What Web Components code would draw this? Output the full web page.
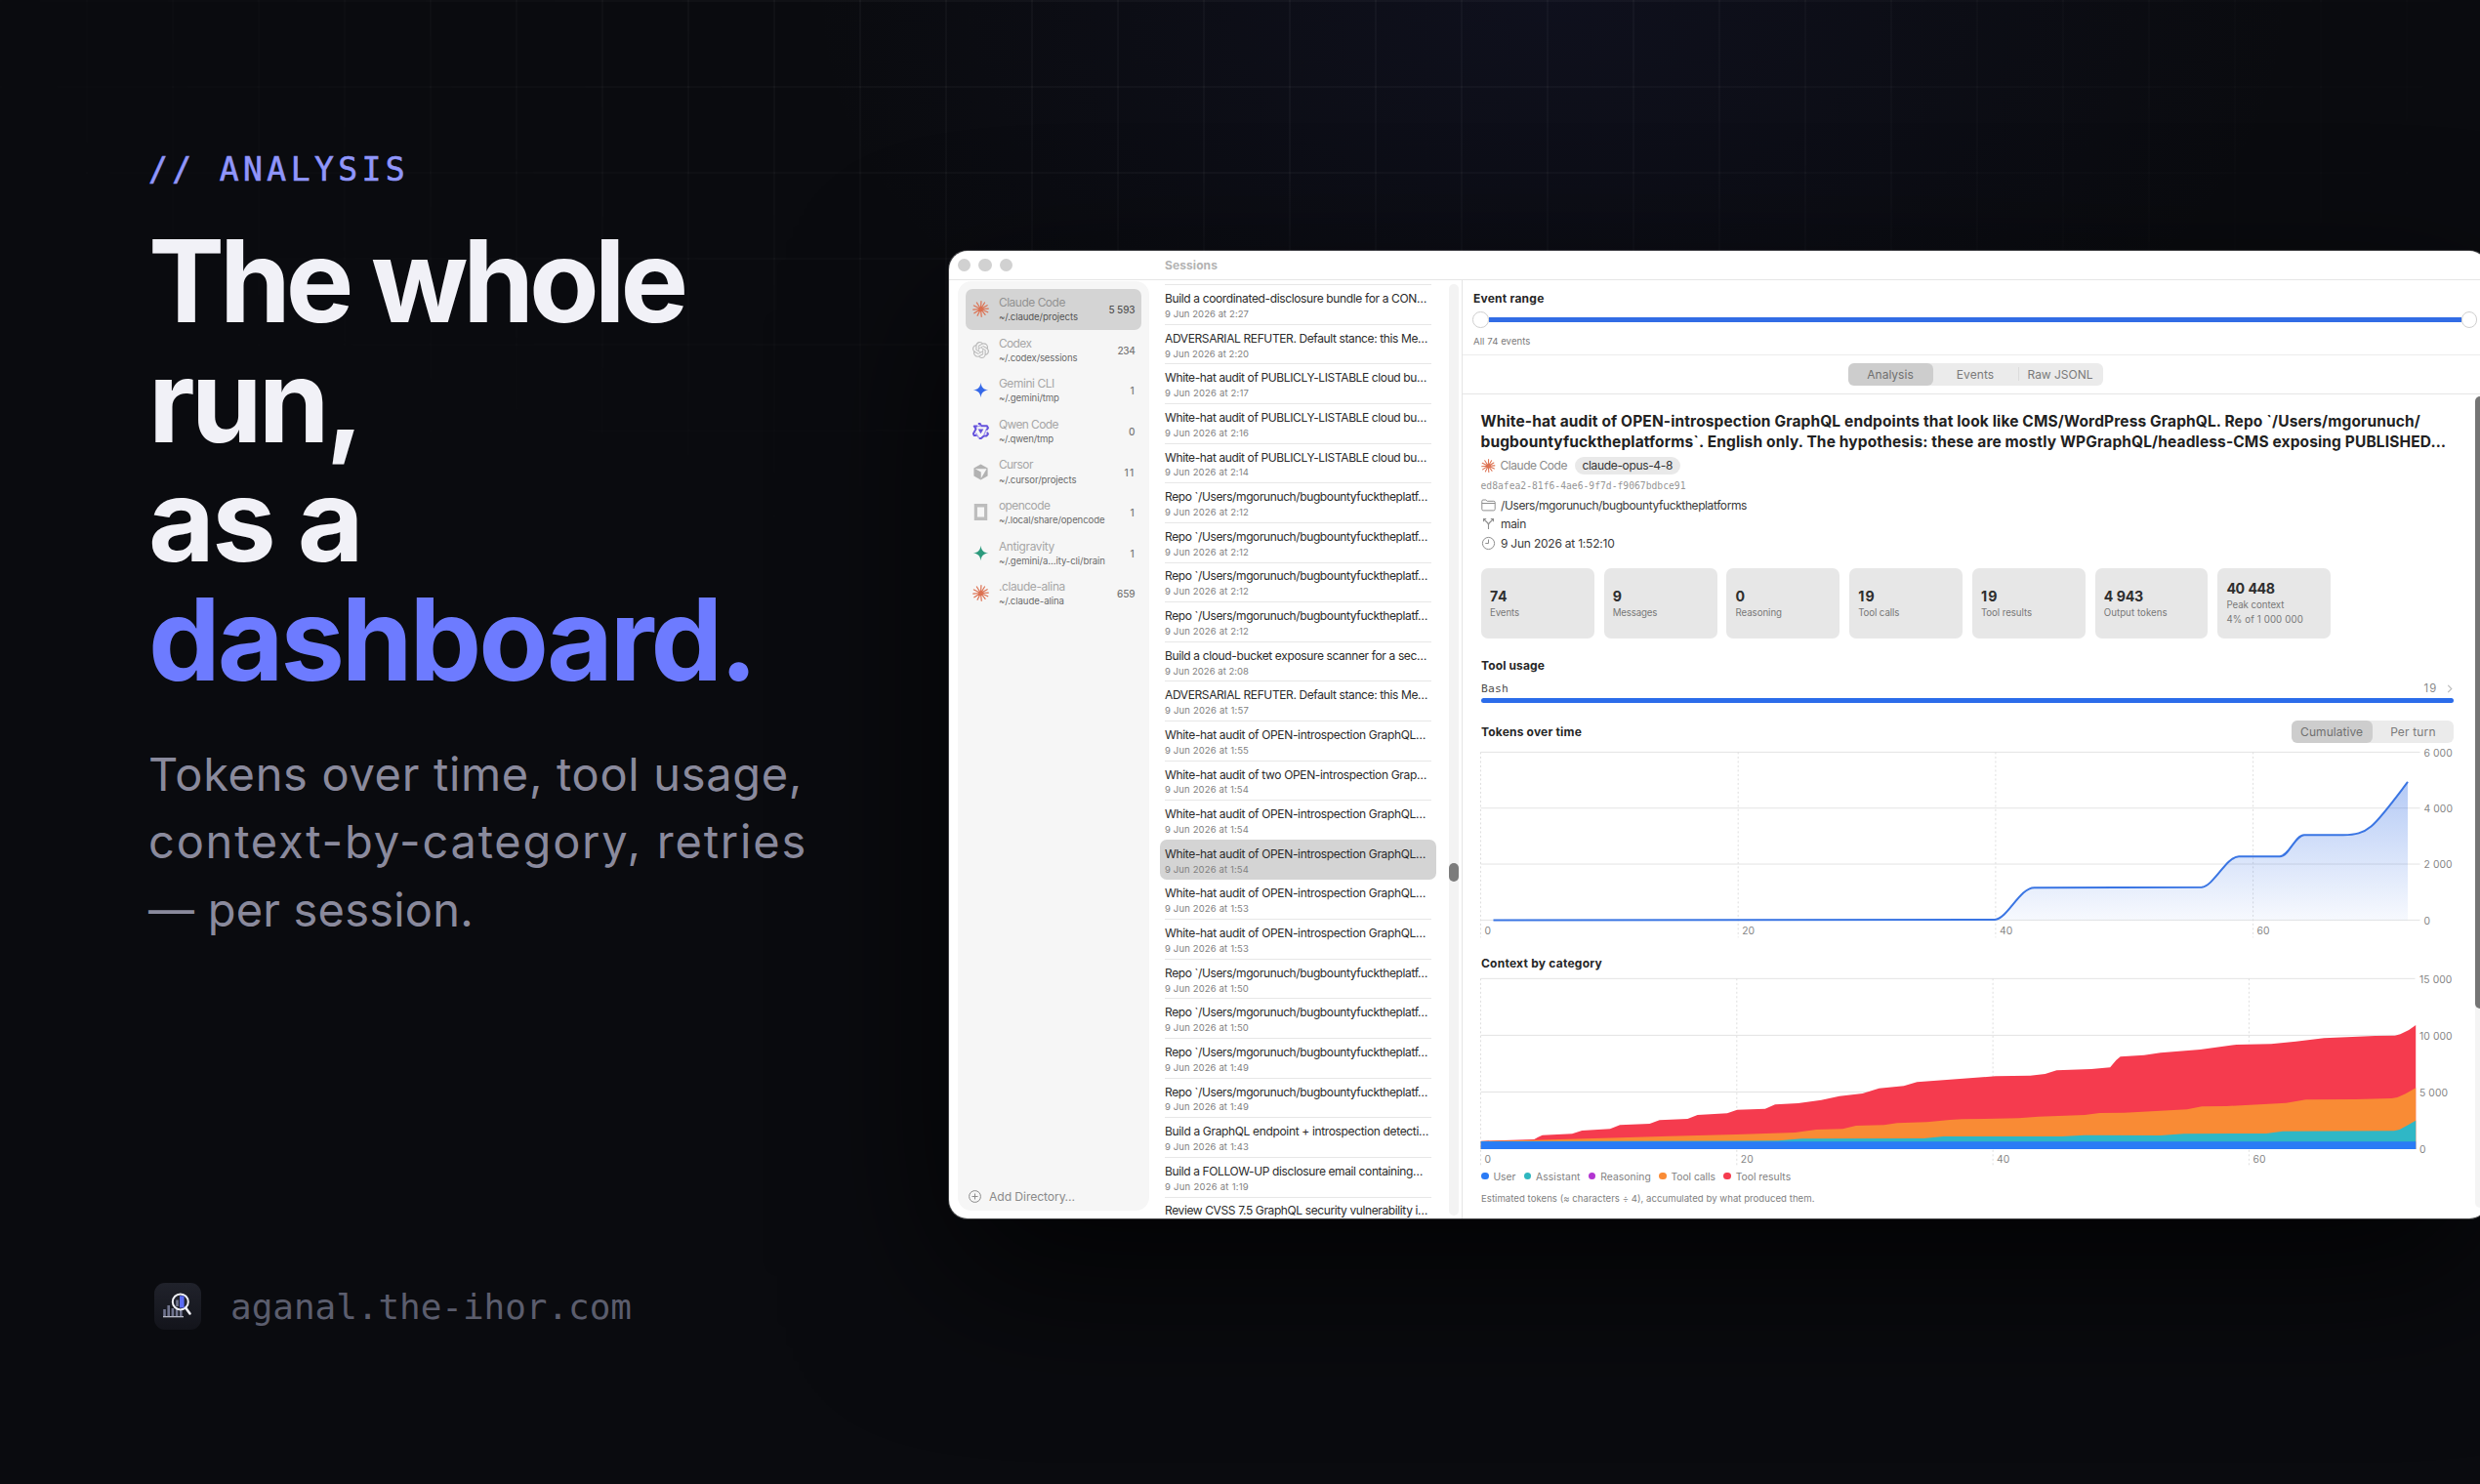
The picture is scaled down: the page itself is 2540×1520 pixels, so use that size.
<!DOCTYPE html>
<html lang="en">
<head>
<meta charset="utf-8">
<title>The whole run, as a dashboard.</title>
<style>
  body {
    margin: 0;
    background: #0a0b0f;
    font-family: Inter, "Liberation Sans", sans-serif;
    overflow: hidden;
  }
</style>
</head>
<body>
<promo-banner>
  <promo-copy slot="copy"></promo-copy>
  <app-window slot="window"></app-window>
</promo-banner>

<script>
'use strict';

const ICONS = {
  claude: `<svg viewBox="0 0 24 24" stroke="#dc7050" stroke-width="1.700" stroke-linecap="round">
    <path d="M12 12 12.6 1M12 12 17.6 2.8M12 12 21.4 6.6M12 12 23 11.4M12 12 22.2 16.6M12 12 18.4 20.4M12 12 13 23M12 12 7.2 21.6M12 12 2.6 18M12 12 1 12.8M12 12 2 7M12 12 6.2 2.8"/></svg>`,
  codex: `<svg viewBox="0 0 24 24" fill="#b9b9b9"><path d="M22.2819 9.8211a5.9847 5.9847 0 0 0-.5157-4.9108 6.0462 6.0462 0 0 0-6.5098-2.9A6.0651 6.0651 0 0 0 4.9807 4.1818a5.9847 5.9847 0 0 0-3.9977 2.9 6.0462 6.0462 0 0 0 .7427 7.0966 5.98 5.98 0 0 0 .511 4.9107 6.051 6.051 0 0 0 6.5146 2.9001A5.9847 5.9847 0 0 0 13.2599 24a6.0557 6.0557 0 0 0 5.7718-4.2058 5.9894 5.9894 0 0 0 3.9977-2.9001 6.0557 6.0557 0 0 0-.7475-7.0729zm-9.022 12.6081a4.4755 4.4755 0 0 1-2.8764-1.0408l.1419-.0804 4.7783-2.7582a.7948.7948 0 0 0 .3927-.6813v-6.7369l2.02 1.1686a.071.071 0 0 1 .038.052v5.5826a4.504 4.504 0 0 1-4.4945 4.4944zm-9.6607-4.1254a4.4708 4.4708 0 0 1-.5346-3.0137l.142.0852 4.783 2.7582a.7712.7712 0 0 0 .7806 0l5.8428-3.3685v2.3324a.0804.0804 0 0 1-.0332.0615L9.74 19.9502a4.4992 4.4992 0 0 1-6.1408-1.6464zM2.3408 7.8956a4.485 4.485 0 0 1 2.3655-1.9728V11.6a.7664.7664 0 0 0 .3879.6765l5.8144 3.3543-2.0201 1.1685a.0757.0757 0 0 1-.071 0l-4.8303-2.7865A4.504 4.504 0 0 1 2.3408 7.872zm16.5963 3.8558L13.1038 8.364 15.1192 7.2a.0757.0757 0 0 1 .071 0l4.8303 2.7913a4.4944 4.4944 0 0 1-.6765 8.1042v-5.6772a.79.79 0 0 0-.407-.667zm2.0107-3.0231l-.142-.0852-4.7735-2.7818a.7759.7759 0 0 0-.7854 0L9.409 9.2297V6.8974a.0662.0662 0 0 1 .0284-.0615l4.8303-2.7866a4.4992 4.4992 0 0 1 6.6802 4.66zM8.3065 12.863l-2.02-1.1638a.0804.0804 0 0 1-.038-.0567V6.0742a4.4992 4.4992 0 0 1 7.3757-3.4537l-.142.0805L8.704 5.459a.7948.7948 0 0 0-.3927.6813zm1.0976-2.3654l2.602-1.4998 2.6069 1.4998v2.9994l-2.5974 1.4997-2.6067-1.4997Z"/></svg>`,
  gemini: `<svg viewBox="0 0 24 24" fill="#3568e8"><path d="M12 1C12.8 8 16 11.200 23 12C16 12.800 12.800 16 12 23C11.200 16 8 12.800 1 12C8 11.200 11.200 8 12 1Z"/></svg>`,
  qwen: `<svg viewBox="0 0 24 24" fill="none" stroke="#6552dc" stroke-linejoin="round">
    <path d="M8.200 1.500 11 1.500 12.500 4.500H21L22.500 7.500 20 11M21.200 13.500 22.500 16.500 20.500 19H16.500L12.500 22.500H9.500M7 18.500H2.500L1.200 16 5 9 2.500 5H7" stroke-width="2.800"/>
    <path d="M7 5 12.500 4.800M20 10 16.500 18M9.500 22.500 5 15" stroke="#a79cf0" stroke-width="2"/>
    <path d="M8 9H16L12 16Z" fill="#6552dc" stroke="none"/></svg>`,
  cursor: `<svg viewBox="0 0 24 24"><path d="M12 .8 22 6.400V17.600L12 23.200 2 17.600V6.400Z" fill="#b2b2b2"/><path d="M3.500 7.300H20.500L12 21.800V12Z" fill="#f6f6f6"/><path d="M3.500 7.300 12 12V21.800L3 17Z" fill="#b2b2b2"/></svg>`,
  opencode: `<svg viewBox="0 0 24 24"><path d="M2.500 0H21.500V24H2.500Z M7 5V19H17V5Z" fill="#bdbdbd" fill-rule="evenodd"/></svg>`,
  antigravity: `<svg viewBox="0 0 24 24" fill="#2b9a7c"><path d="M12 1C12.800 8 16 11.200 23 12C16 12.800 12.800 16 12 23C11.200 16 8 12.800 1 12C8 11.200 11.200 8 12 1Z"/></svg>`,
  plus: `<svg viewBox="0 0 13 13" fill="none" stroke="#8a8a8a" stroke-width="1"><circle cx="6.500" cy="6.500" r="5.900"/><path d="M6.500 3.500V9.500M3.500 6.500H9.500"/></svg>`,
  folder: `<svg viewBox="0 0 15 15" fill="none" stroke="#8e8e8e" stroke-width="1"><path d="M.8 11.700V3.300Q.8 2 2.100 2H4.800L6.200 3.300H12.800Q14.200 3.300 14.200 4.600V11.500Q14.200 12.900 12.800 12.900H2.200Q.8 12.900 .8 11.700ZM.8 5.500H14.200"/></svg>`,
  branch: `<svg viewBox="0 0 15 15" fill="none" stroke="#8e8e8e" stroke-width="1.100"><path d="M7.500 13V8.800Q7.500 7.500 6.500 6.500L3 3M7.500 8.800Q7.500 7.500 8.500 6.500L12 3M2.500 5.200V2.500H5.200M9.800 2.500H12.500V5.200"/></svg>`,
  clock: `<svg viewBox="0 0 15 15" fill="none" stroke="#8e8e8e" stroke-width="1"><circle cx="7.500" cy="7.500" r="6.100"/><path d="M7.500 3.500V7.500H4.300"/></svg>`,
  chevron: `<svg viewBox="0 0 6 10" fill="none" stroke="#bdbdbd" stroke-width="1.300"><path d="M1 1 5 5 1 9"/></svg>`
};

const SOURCES = [
  ['claude', 'Claude Code', 68, '~/.claude/projects', 81, '5 593', 27],
  ['codex', 'Codex', 33.500, '~/.codex/sessions', 80.500, '234', 18],
  ['gemini', 'Gemini CLI', 57, '~/.gemini/tmp', 62, '1', 5],
  ['qwen', 'Qwen Code', 61, '~/.qwen/tmp', 56, '0', 6.500],
  ['cursor', 'Cursor', 35, '~/.cursor/projects', 79.500, '11', 11],
  ['opencode', 'opencode', 52.500, '~/.local/share/opencode', 108.500, '1', 5],
  ['antigravity', 'Antigravity', 57, '~/.gemini/a…ity-cli/brain', 109, '1', 5],
  ['claude', '.claude-alina', 68, '~/.claude-alina', 67, '659', 18.500]
];

const REPO = 'Repo `/Users/mgorunuch/bugbountyfucktheplatf…';
const OPEN = 'White-hat audit of OPEN-introspection GraphQL…';
const PUBLIC = 'White-hat audit of PUBLICLY-LISTABLE cloud bu…';
const REFUTER = 'ADVERSARIAL REFUTER. Default stance: this Me…';

// [title, width, time]
const SESSIONS = [
  ['Build a coordinated-disclosure bundle for a CON…', 268, '2:27'],
  [REFUTER, 269, '2:20'],
  [PUBLIC, 268, '2:17'],
  [PUBLIC, 268, '2:16'],
  [PUBLIC, 268, '2:14'],
  [REPO, 269, '2:12'],
  [REPO, 269, '2:12'],
  [REPO, 269, '2:12'],
  [REPO, 269, '2:12'],
  ['Build a cloud-bucket exposure scanner for a sec…', 268, '2:08'],
  [REFUTER, 269, '1:57'],
  [OPEN, 267, '1:55'],
  ['White-hat audit of two OPEN-introspection Grap…', 268, '1:54'],
  [OPEN, 267, '1:54'],
  [OPEN, 267, '1:54'],
  [OPEN, 267, '1:53'],
  [OPEN, 267, '1:53'],
  [REPO, 269, '1:50'],
  [REPO, 269, '1:50'],
  [REPO, 269, '1:49'],
  [REPO, 269, '1:49'],
  ['Build a GraphQL endpoint + introspection detecti…', 270, '1:43'],
  ['Build a FOLLOW-UP disclosure email containing…', 264, '1:19'],
  ['Review CVSS 7.5 GraphQL security vulnerability i…', 269, '']
];
const SELECTED_SESSION = 14;

class ShadowElement extends HTMLElement {
  connectedCallback() {
    if (this.shadowRoot)
      return;

    this.attachShadow({ mode: 'open' });
    const template = document.createElement('template');
    template.innerHTML = this.render();
    this.shadowRoot.appendChild(template.content.cloneNode(true));
  }
}

// Tracks its text so that it spans `w` pixels.
class FitText extends HTMLElement {
  connectedCallback() {
    if (!this.shadowRoot) {
      this.attachShadow({ mode: 'open' });
      this.shadowRoot.innerHTML = '<style>:host { display: inline-block; white-space: nowrap; }</style><slot></slot>';
    }

    const natural = this.getBoundingClientRect().width;
    const target = Number(this.getAttribute('w'));
    this.style.letterSpacing = `${((target - natural) / this.textContent.length).toFixed(3)}px`;
  }
}

class PromoBanner extends ShadowElement {
  render() {
    return `
      <style>
        :host {
          display: grid;
          grid-template-columns: 972px 1576px;
          width: 2540px;
          height: 1520px;
          overflow: hidden;
          position: relative;
          background: radial-gradient(ellipse 760px 480px at 1590px 0, rgba(50, 54, 130, 0.12), transparent 100%), #0a0b0f;
        }
        .grid {
          position: absolute;
          inset: 0;
          background-image:
            linear-gradient(rgba(255, 255, 255, 0.033) 2px, transparent 2px),
            linear-gradient(90deg, rgba(255, 255, 255, 0.033) 2px, transparent 2px);
          background-size: 88px 88px;
          -webkit-mask-image: radial-gradient(ellipse 1500px 640px at 1270px 0, #000 25%, transparent 95%);
          mask-image: radial-gradient(ellipse 1500px 640px at 1270px 0, #000 25%, transparent 95%);
        }
        ::slotted(*) { position: relative; }
      </style>
      <div class="grid"></div>
      <slot name="copy"></slot>
      <slot name="window"></slot>`;
  }
}

class PromoCopy extends ShadowElement {
  render() {
    return `
      <style>
        :host {
          display: flex;
          flex-direction: column;
          box-sizing: border-box;
          padding: 153.500px 0 0 152px;
        }
        .mono { font-family: "DejaVu Sans Mono", "Liberation Mono", monospace; }
        .eyebrow { font-size: 33px; line-height: 40px; color: #9096fb; -webkit-text-stroke: 0.6px #9096fb; }
        h1 {
          margin: 33.900px 0 41.200px;
          font-size: 117px;
          line-height: 122.300px;
          font-weight: 700;
          color: #f1f1f7;
        }
        h1 div { height: 122.300px; }
        .accent { color: #6d7bff; }
        .lead { font-size: 47px; line-height: 69.400px; color: #8a8a9d; }
        .lead div { height: 69.400px; }
        footer {
          display: flex;
          align-items: center;
          gap: 30px;
          margin: 348px 0 0 6px;
          font-size: 36px;
          color: #5b5d6d;
        }
        footer svg { width: 48px; height: 48px; }
        footer fit-text { padding-top: 1px; }
      </style>
      <div class="eyebrow mono"><fit-text w="267">// ANALYSIS</fit-text></div>
      <h1>
        <div><fit-text w="548">The whole</fit-text></div>
        <div><fit-text w="217">run,</fit-text></div>
        <div><fit-text w="218">as a</fit-text></div>
        <div class="accent"><fit-text w="621">dashboard.</fit-text></div>
      </h1>
      <div class="lead">
        <div><fit-text w="670">Tokens over time, tool usage,</fit-text></div>
        <div><fit-text w="675">context-by-category, retries</fit-text></div>
        <div><fit-text w="333">— per session.</fit-text></div>
      </div>
      <footer class="mono">
        <svg viewBox="0 0 48 48">
          <defs><linearGradient id="tile" x2="0" y2="1"><stop stop-color="#20222b"/><stop offset="1" stop-color="#13141b"/></linearGradient></defs>
          <rect width="48" height="48" rx="11" fill="url(#tile)"/>
          <path d="M10.500 34V27M14.700 34V23M18.900 34V26M23.100 34V25M27.300 34V26" stroke="#70748e" stroke-width="2.600"/>
          <path d="M9 34.700H30" stroke="#c9cbd8" stroke-width="1.200"/>
          <circle cx="26.800" cy="19.400" r="8" fill="#22242f" stroke="#f0f1f6" stroke-width="2"/>
          <path d="M23.500 24V17.500" stroke="#747890" stroke-width="2.600"/>
          <path d="M28.300 25.500V13.300" stroke="#5b6bf5" stroke-width="4.600"/>
          <path d="M32.300 25.800 36.500 31.500" stroke="#f0f1f6" stroke-width="2.600" stroke-linecap="round"/>
        </svg>
        <fit-text w="411">aganal.the-ihor.com</fit-text>
      </footer>`;
  }
}

class AppWindow extends ShadowElement {
  render() {
    return `
      <style>
        :host {
          display: grid;
          grid-template-columns: 209px 317px 1fr;
          grid-template-rows: 30px 1fr;
          box-sizing: border-box;
          width: 1576px;
          height: 991px;
          margin-top: 257px;
          background: #fff;
          border-radius: 19px;
          overflow: hidden;
          color: #262626;
          box-shadow: 0 0 0 1px rgba(255, 255, 255, 0.25), 0 60px 160px rgba(0, 0, 0, 0.75);
        }
        header {
          grid-column: 1 / -1;
          display: grid;
          grid-template-columns: subgrid;
          align-items: center;
          border-bottom: 1px solid #e6e6e6;
        }
        .lights { display: flex; gap: 8.200px; padding-left: 8.500px; }
        .lights i { width: 13.500px; height: 13.500px; border-radius: 50%; background: #d1d1d1; }
        .title { padding-left: 12px; font-size: 12px; font-weight: 700; color: #b3b3b3; }
      </style>
      <header>
        <div class="lights"><i></i><i></i><i></i></div>
        <div class="title"><fit-text w="54">Sessions</fit-text></div>
      </header>
      <source-sidebar></source-sidebar>
      <session-list></session-list>
      <session-detail></session-detail>`;
  }
}

class SourceSidebar extends ShadowElement {
  render() {
    const items = SOURCES.map(([icon, name, nameWidth, path, pathWidth, count, countWidth], i) => `
      <div class="item${i === 0 ? ' selected' : ''}">
        ${ICONS[icon]}
        <div class="text">
          <div class="name"><fit-text w="${nameWidth}">${name}</fit-text></div>
          <div class="path"><fit-text w="${pathWidth}">${path}</fit-text></div>
        </div>
        <div class="count"><fit-text w="${countWidth}">${count}</fit-text></div>
      </div>`).join('');

    return `
      <style>
        :host {
          display: flex;
          flex-direction: column;
          box-sizing: border-box;
          margin: 1px 4px 8px 9px;
          padding: 8px;
          border-radius: 14px;
          background: #f6f6f6;
        }
        .item {
          display: flex;
          align-items: center;
          box-sizing: border-box;
          height: 41.600px;
          padding: 0 6.500px 0 7.400px;
          border-radius: 7px;
        }
        .item.selected { background: #d4d4d4; }
        .item svg { width: 17px; height: 17px; margin-right: 9.500px; }
        .text { flex: 1; padding-top: 1px; line-height: 15.300px; }
        .text div { height: 15.300px; }
        .name { font-size: 11.900px; color: #a6a6a6; }
        .path { font-size: 9.600px; color: #6a6a6a; }
        .count { padding-top: 1px; font-size: 10px; font-weight: 500; color: #777; }
        .selected .name { color: #929292; }
        .selected .path, .selected .count { color: #555; }
        .add {
          display: flex;
          align-items: center;
          gap: 8.500px;
          height: 13px;
          margin-top: auto;
          padding-left: 2.500px;
          font-size: 12.200px;
          color: #8a8a8a;
        }
        .add svg { width: 13px; height: 13px; }
      </style>
      ${items}
      <div class="add">${ICONS.plus}<fit-text w="88">Add Directory…</fit-text></div>`;
  }
}

class SessionList extends ShadowElement {
  render() {
    const rows = SESSIONS.map(([title, width, time], i) => `
      <div class="row${i === SELECTED_SESSION ? ' selected' : ''}">
        <div class="inner">
          <div class="title"><fit-text w="${width}">${title}</fit-text></div>
          ${time && `<div class="date"><fit-text w="86">9 Jun 2026 at ${time}</fit-text></div>`}
        </div>
      </div>`).join('');

    return `
      <style>
        :host {
          display: flex;
          box-sizing: border-box;
          min-height: 0;
          overflow: hidden;
          border-right: 1px solid #e4e4e4;
        }
        .rows { flex: none; width: 283px; padding: 4.200px 12.500px 0 7px; }
        .row { height: 40.630px; padding: 0 5.500px 0 5px; border-radius: 7px; }
        .inner { border-top: 1px solid #e7e7e7; padding-top: 5.900px; line-height: 15.800px; }
        .inner div { height: 15.800px; }
        .selected { background: #d4d4d4; }
        .selected .inner, .selected + .row .inner { border-color: transparent; }
        .title { font-size: 12px; color: #2b2b2b; }
        .date { font-size: 9.500px; color: #808080; }
        .track { width: 10.500px; margin: 4px 0 3px; border-radius: 5px; background: #f3f3f3; }
        .thumb { height: 19px; margin-top: 593px; border-radius: 5px; background: #7c7c7c; }
      </style>
      <div class="rows">${rows}</div>
      <div class="track"><div class="thumb"></div></div>`;
  }
}

class SegmentedControl extends ShadowElement {
  render() {
    const widths = this.getAttribute('widths').split(',');
    const segments = this.getAttribute('labels').split(',').map((label, i) => `
      <div class="segment${i === 0 ? ' on' : ''}${i === 2 ? ' divided' : ''}"><fit-text w="${widths[i]}">${label}</fit-text></div>`).join('');

    return `
      <style>
        :host {
          display: flex;
          height: 23px;
          border-radius: 6px;
          background: #ebebeb;
          font-size: 12px;
          color: #7a7a7a;
        }
        .segment { flex: 1; display: flex; align-items: center; justify-content: center; padding-top: 0.500px; }
        .on { border-radius: 6px; background: #cdcdcd; color: #707070; }
        .divided { background: linear-gradient(#dcdcdc, #dcdcdc) 0 50% / 1px 14px no-repeat; }
      </style>
      ${segments}`;
  }
}

class StatCard extends ShadowElement {
  render() {
    const [valueWidth, labelWidth, noteWidth] = this.getAttribute('widths').split(',');
    const note = this.getAttribute('note');

    return `
      <style>
        :host {
          display: flex;
          flex-direction: column;
          justify-content: center;
          box-sizing: border-box;
          width: 115.800px;
          height: 72px;
          padding: 1.500px 0 0 9px;
          border-radius: 7px;
          background: #e7e7e7;
        }
        .value { height: 16.500px; line-height: 16.500px; font-size: 14.200px; font-weight: 700; word-spacing: 1px; color: #2e2e2e; }
        .label { height: 15.500px; line-height: 15.500px; font-size: 9.700px; color: #787878; }
      </style>
      <div class="value"><fit-text w="${valueWidth}">${this.getAttribute('value')}</fit-text></div>
      <div class="label"><fit-text w="${labelWidth}">${this.getAttribute('label')}</fit-text></div>
      ${note ? `<div class="label"><fit-text w="${noteWidth}">${note}</fit-text></div>` : ''}`;
  }
}

// Axes shared by both charts; the plot's top left corner is at 0,0.
function axes({ rows, rowHeight, columnWidth, right, labelX }) {
  const bottom = rowHeight * (rows.length - 1);
  const lines = rows.map((label, i) => `
    <path d="M0 ${i * rowHeight}H${right}" stroke="#e3e3e3"/>
    <text x="${labelX}" y="${i * rowHeight + 4.200}">${label}</text>`).join('');
  const columns = [0, 20, 40, 60].map((label, i) => `
    <path d="M${i * columnWidth} 0V${bottom + 18}" stroke="#dedede" stroke-dasharray="2 2.500"/>
    <text x="${i * columnWidth + 4}" y="${bottom + 14.200}">${label}</text>`).join('');

  return lines + columns;
}

const CHART_STYLE = `
  <style>
    :host { display: block; }
    svg { display: block; overflow: visible; }
    text { font-size: 10.300px; fill: #858585; letter-spacing: 0.1px; }
  </style>`;

class TokensChart extends ShadowElement {
  render() {
    const line = 'M13 172 526.500 171.600C540 170.500 552 138.800 567 138.800L738.500 138.300C750 138 764 106.800 776.500 106.800H818.500C828 106.800 834 84.800 843.500 84.800H883.500C910 84.800 915 76 949.500 30.500';

    return `${CHART_STYLE}
      <svg width="1000" height="205" viewBox="0.500 -9.400 1000 205">
        <defs>
          <linearGradient id="fill" gradientUnits="userSpaceOnUse" x1="0" y1="30" x2="0" y2="172">
            <stop stop-color="#2f6be4" stop-opacity="0.36"/>
            <stop offset="1" stop-color="#2f6be4" stop-opacity="0.04"/>
          </linearGradient>
        </defs>
        ${axes({ rows: ['6 000', '4 000', '2 000', '0'], rowHeight: 57.330, columnWidth: 263.700, right: 962, labelX: 966 })}
        <path d="${line}V172H13Z" fill="url(#fill)"/>
        <path d="${line}" fill="none" stroke="#3a75e3" stroke-width="2"/>
      </svg>`;
  }
}

class ContextChart extends ShadowElement {
  render() {
    const results = '79,628 240,623 252,616 265,610 355,606 385,596 470,591 500,579 590,575 620,564 705,560 735,548 825,543 855,532 940,529 970,516 1040,512 1110,502 1165,490 1235,482 1285,466 1360,459 1400,447 1490,440 1638,429 1743,427 1788,422 1823,411 1928,407 1985,402 2003,380 2016,369 2088,364 2138,357 2258,347 2368,332 2473,330 2548,322 2633,312 2788,305 2848,304 2864,300 2890,287 2911,272';
    const calls = '79,629 240,625 500,618 650,613 850,608 1030,602 1095,593 1175,591 1215,581 1300,579 1340,573 1430,570 1500,563 1538,561 1708,558 1768,553 1908,548 1953,542 2028,541 2218,531 2263,522 2338,521 2518,511 2578,501 2728,500 2838,497 2855,494 2880,483 2911,465';
    const assistant = '79,629 980,627 1050,621 1420,620 1480,614 1838,614 1908,610 2138,611 2208,606 2458,605 2508,598 2845,597 2862,593 2885,580 2911,565';
    const area = (points, fill) => `<polygon points="${points} 2911,653 79,653" fill="${fill}"/>`;

    return `${CHART_STYLE}
      <svg width="1000" height="202" viewBox="0.500 -8.300 1000 202">
        ${axes({ rows: ['15 000', '10 000', '5 000', '0'], rowHeight: 58.100, columnWidth: 262.300, right: 957, labelX: 961.500 })}
        <g transform="translate(-26.400 -43) scale(0.33807 0.33333)">
          ${area(results, '#f53b4e')}
          ${area(calls, '#f98b35')}
          ${area(assistant, '#2fb7c6')}
          ${area('79,630 2911,630', '#2a7bf6')}
        </g>
      </svg>`;
  }
}

class SessionDetail extends ShadowElement {
  render() {
    const legend = [
      ['User', 23, '#2a7bf6'],
      ['Assistant', 45.500, '#2fb7bf'],
      ['Reasoning', 51.500, '#b235d1'],
      ['Tool calls', 45.500, '#f98b35'],
      ['Tool results', 56.500, '#f53b4e']
    ].map(([label, width, color]) => `
      <span><i style="background: ${color}"></i><fit-text w="${width}">${label}</fit-text></span>`).join('');

    return `
      <style>
        :host { display: flex; flex-direction: column; min-width: 0; min-height: 0; }
        .range { box-sizing: border-box; height: 77px; padding: 9.900px 11px 0 10px; border-bottom: 1px solid #ececec; }
        h2 { margin: 0; height: 16px; line-height: 17px; font-size: 12px; font-weight: 700; color: #262626; }
        .range h2, .range small { margin-left: 1px; }
        .slider { display: flex; align-items: center; height: 16px; margin: 6.600px 0 7px; }
        .knob { box-sizing: border-box; width: 16.500px; height: 16.500px; border: 1.500px solid #cfcfcf; border-radius: 50%; background: #fff; }
        .rail { flex: 1; height: 4.500px; background: #316ce5; }
        small { display: block; height: 14px; line-height: 15px; font-size: 9.600px; color: #7c7c7c; }
        .tabs { display: flex; justify-content: center; align-items: center; height: 38.500px; border-bottom: 1px solid #e6e6e6; }
        .tabs segmented-control { width: 261px; }
        .body { flex: 1; display: flex; justify-content: space-between; min-height: 0; }
        .main { width: 996px; padding: 17.100px 0 0 19px; }
        h1 { margin: 0 0 0 -0.500px; font-size: 15.500px; line-height: 21px; font-weight: 700; color: #222; }
        h1 div { height: 21px; }
        .agent { display: flex; align-items: center; height: 18.500px; margin-top: 5px; font-size: 12px; color: #8a8a8a; }
        .agent svg { width: 14.500px; height: 14.500px; margin-right: 5px; }
        .pill { display: flex; align-items: center; box-sizing: border-box; height: 18.500px; margin-left: 8px; padding: 0 7.500px; border-radius: 10px; background: #e9e9e9; color: #333; }
        .mono { font-family: "DejaVu Sans Mono", "Liberation Mono", monospace; }
        .hash { height: 12px; line-height: 12px; margin: 5.500px 0 3.700px -0.500px; font-size: 9.700px; color: #959595; }
        .meta { display: flex; align-items: center; gap: 5px; height: 19.700px; font-size: 12px; color: #3a3a3a; }
        .meta svg { width: 15px; height: 15px; }
        .cards { display: flex; gap: 9.950px; margin: 16px 0 19px; }
        .tool { display: flex; align-items: center; height: 16px; margin: 8px 0 1.300px; font-size: 11.300px; color: #4c4c4c; }
        .tool .count { margin-left: auto; font-size: 11.300px; color: #8a8a8a; }
        .tool svg { width: 6px; height: 9px; margin: 0 1px 0 9.500px; }
        .bar { height: 5px; border-radius: 2.500px; background: #2b6cea; }
        .heading { display: flex; align-items: center; justify-content: space-between; height: 23px; margin-top: 18.300px; }
        .heading segmented-control { width: 166.500px; }
        .context { margin-top: 12.400px; }
        .legend { display: flex; gap: 8.300px; height: 12px; margin-top: 2.300px; font-size: 10.300px; color: #808080; }
        .legend span { display: flex; align-items: center; gap: 4.800px; }
        .legend i { width: 7.600px; height: 7.600px; border-radius: 50%; }
        .note { height: 12px; line-height: 13px; margin-top: 9.900px; font-size: 9.600px; color: #808080; }
        .track { width: 13px; margin: 2px 0 11px; border-radius: 5px; background: #f4f4f4; }
        .thumb { height: 627px; border-radius: 5px; background: #757575; }
      </style>
      <section class="range">
        <h2><fit-text w="72.500">Event range</fit-text></h2>
        <div class="slider"><div class="knob"></div><div class="rail"></div><div class="knob"></div></div>
        <small><fit-text w="58.500">All 74 events</fit-text></small>
      </section>
      <nav class="tabs"><segmented-control labels="Analysis,Events,Raw JSONL" widths="47.500,38.500,67"></segmented-control></nav>
      <div class="body">
        <div class="main">
          <h1>
            <div><fit-text w="962.500">White-hat audit of OPEN-introspection GraphQL endpoints that look like CMS/WordPress GraphQL. Repo \`/Users/mgorunuch/</fit-text></div>
            <div><fit-text w="988.500">bugbountyfucktheplatforms\`. English only. The hypothesis: these are mostly WPGraphQL/headless-CMS exposing PUBLISHED…</fit-text></div>
          </h1>
          <div class="agent">
            ${ICONS.claude}<fit-text w="68.500">Claude Code</fit-text>
            <div class="pill"><fit-text w="92.500">claude-opus-4-8</fit-text></div>
          </div>
          <div class="hash mono"><fit-text w="210">ed8afea2-81f6-4ae6-9f7d-f9067bdbce91</fit-text></div>
          <div class="meta">${ICONS.folder}<fit-text w="252">/Users/mgorunuch/bugbountyfucktheplatforms</fit-text></div>
          <div class="meta">${ICONS.branch}<fit-text w="26">main</fit-text></div>
          <div class="meta">${ICONS.clock}<fit-text w="116.500">9 Jun 2026 at 1:52:10</fit-text></div>
          <div class="cards">
            <stat-card value="74" label="Events" widths="18,30"></stat-card>
            <stat-card value="9" label="Messages" widths="9.500,45.500"></stat-card>
            <stat-card value="0" label="Reasoning" widths="9.500,47.500"></stat-card>
            <stat-card value="19" label="Tool calls" widths="17.500,42"></stat-card>
            <stat-card value="19" label="Tool results" widths="17.500,52"></stat-card>
            <stat-card value="4 943" label="Output tokens" widths="40,65"></stat-card>
            <stat-card value="40 448" label="Peak context" note="4% of 1 000 000" widths="49,59,78.500"></stat-card>
          </div>
          <h2><fit-text w="65">Tool usage</fit-text></h2>
          <div class="tool"><span class="mono"><fit-text w="28">Bash</fit-text></span><span class="count"><fit-text w="14">19</fit-text></span>${ICONS.chevron}</div>
          <div class="bar"></div>
          <div class="heading">
            <h2><fit-text w="103">Tokens over time</fit-text></h2>
            <segmented-control labels="Cumulative,Per turn" widths="64,46.500"></segmented-control>
          </div>
          <tokens-chart></tokens-chart>
          <h2 class="context"><fit-text w="124">Context by category</fit-text></h2>
          <context-chart></context-chart>
          <div class="legend">${legend}</div>
          <div class="note"><fit-text w="341.500">Estimated tokens (≈ characters ÷ 4), accumulated by what produced them.</fit-text></div>
        </div>
        <div class="track"><div class="thumb"></div></div>
      </div>`;
  }
}

customElements.define('promo-banner', PromoBanner);
customElements.define('promo-copy', PromoCopy);
customElements.define('app-window', AppWindow);
customElements.define('source-sidebar', SourceSidebar);
customElements.define('session-list', SessionList);
customElements.define('segmented-control', SegmentedControl);
customElements.define('stat-card', StatCard);
customElements.define('tokens-chart', TokensChart);
customElements.define('context-chart', ContextChart);
customElements.define('session-detail', SessionDetail);
customElements.define('fit-text', FitText);
</script>
</body>
</html>
